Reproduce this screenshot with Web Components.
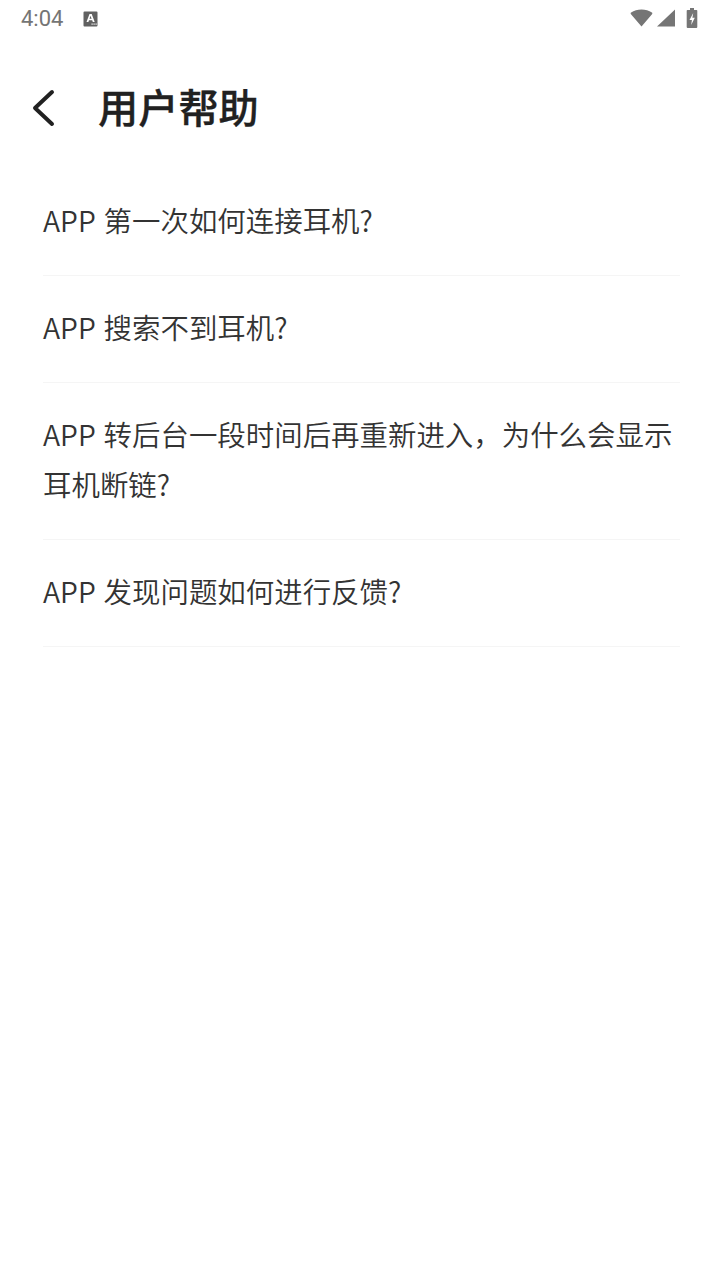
<!DOCTYPE html>
<html lang="zh-CN">
<head>
<meta charset="utf-8">
<title>用户帮助</title>
<style>
    html, body { margin: 0; padding: 0; background: #fff; }
    body { width: 720px; height: 1280px; overflow: hidden; font-family: "Noto Sans CJK SC", "Noto Sans", sans-serif; }
</style>
</head>
<body>
<help-page>
    <status-bar slot="status" time="4:04"></status-bar>
    <title-bar slot="title">用户帮助</title-bar>
    <help-item>APP 第一次如何连接耳机?</help-item>
    <help-item>APP 搜索不到耳机?</help-item>
    <help-item>APP 转后台一段时间后再重新进入，为什么会显示耳机断链?</help-item>
    <help-item>APP 发现问题如何进行反馈?</help-item>
</help-page>

<script>
class HelpPage extends HTMLElement {
    constructor () {
        super();
        this.attachShadow({ mode: 'open' }).innerHTML = `
<style>
    :host { display: flex; flex-direction: column; height: 1280px; background: #fff; }
    .list { display: flex; flex-direction: column; padding: 0 40px 0 43px; }
</style>
<slot name="status"></slot>
<slot name="title"></slot>
<div class="list"><slot></slot></div>`;
    }
}

class StatusBar extends HTMLElement {
    constructor () {
        super();
        this.attachShadow({ mode: 'open' }).innerHTML = `
<style>
    :host { display: flex; align-items: center; height: 36px; padding: 0 22px 0 21px; color: #757575; }
    #time { font: 22px/38px Roboto, "Noto Sans", sans-serif; width: 62px; margin-top: 2px; }
    svg { display: block; }
    .badge { margin-top: 2px; }
    .right { margin-left: auto; display: flex; align-items: center; }
    .wifi { margin-right: 4px; }
    .signal { margin-right: 11px; }
</style>
<span id="time"></span>
<svg class="badge" width="16" height="16" viewBox="0 0 16 16">
    <path fill="#616161" d="M1.500 .5h12a1 1 0 0 1 1 1v13a1 1 0 0 1-1 1h-12a1 1 0 0 1-1-1v-13a1 1 0 0 1 1-1z"/>
    <path fill="#fff" d="M6.500 3h2.200l3 8h-1.900l-.6-1.800H6l-.6 1.800H3.500zM6.500 7.800h2.100L7.500 4.700z"/>
    <rect fill="#fff" x="8.500" y="12.500" width="1.200" height="1.200"/>
    <rect fill="#fff" x="10.500" y="12.500" width="1.200" height="1.200"/>
    <rect fill="#fff" x="12.500" y="12.500" width="1.200" height="1.200"/>
</svg>
<div class="right">
    <svg class="wifi" width="23" height="20" viewBox="0 0 23 20">
        <path fill="#757575" d="M1 6.200C0.500 5.700 0.500 5 1.100 4.600 4 2.600 7.600 1.500 11.500 1.500s7.500 1.100 10.400 3.100c.6.400.6 1.100.1 1.600L11.500 18.500z"/>
    </svg>
    <svg class="signal" width="18" height="20" viewBox="0 0 18 20">
        <path fill="#757575" d="M0 18.500L18 1.500v17z"/>
    </svg>
    <svg width="12" height="22" viewBox="0 0 12 22">
        <path fill="#757575" d="M4 1h4v2h2.500a.8.8 0 0 1 .8.8V20a1 1 0 0 1-1 1H1.700a1 1 0 0 1-1-1V3.800a.8.8 0 0 1 .8-.8H4z"/>
        <path fill="#fff" d="M7.200 6L3.500 13h2.400l-.7 5 3.600-7.300H6.400z"/>
    </svg>
</div>`;
        this.shadowRoot.getElementById('time').textContent = this.getAttribute('time');
    }
}

class TitleBar extends HTMLElement {
    constructor () {
        super();
        this.attachShadow({ mode: 'open' }).innerHTML = `
<style>
    :host { display: flex; align-items: flex-start; height: 133px; padding: 53px 0 0 31px; box-sizing: border-box; color: #212121; }
    svg { display: block; flex: none; margin-right: 42px; }
    h1 { margin: -3px 0 0; font: 500 40.200px/40px "Noto Sans CJK SC", sans-serif; -webkit-text-stroke: .35px #212121; }
</style>
<svg width="25" height="38" viewBox="0 0 25 38">
    <path fill="none" stroke="#212121" stroke-width="4" stroke-linecap="round" stroke-linejoin="round" d="M21 3L4 19l17 16"/>
</svg>
<h1><slot></slot></h1>`;
    }
}

class HelpItem extends HTMLElement {
    constructor () {
        super();
        this.attachShadow({ mode: 'open' }).innerHTML = `
<style>
    :host { display: block; padding: 26px 0 30px; border-bottom: 1px solid #f5f5f5; color: #333; font: 350 28.450px/50px "Noto Sans CJK SC", sans-serif; word-spacing: 1.500px; }
</style>
<slot></slot>`;
    }
}

customElements.define('help-page', HelpPage);
customElements.define('status-bar', StatusBar);
customElements.define('title-bar', TitleBar);
customElements.define('help-item', HelpItem);
</script>
</body>
</html>
